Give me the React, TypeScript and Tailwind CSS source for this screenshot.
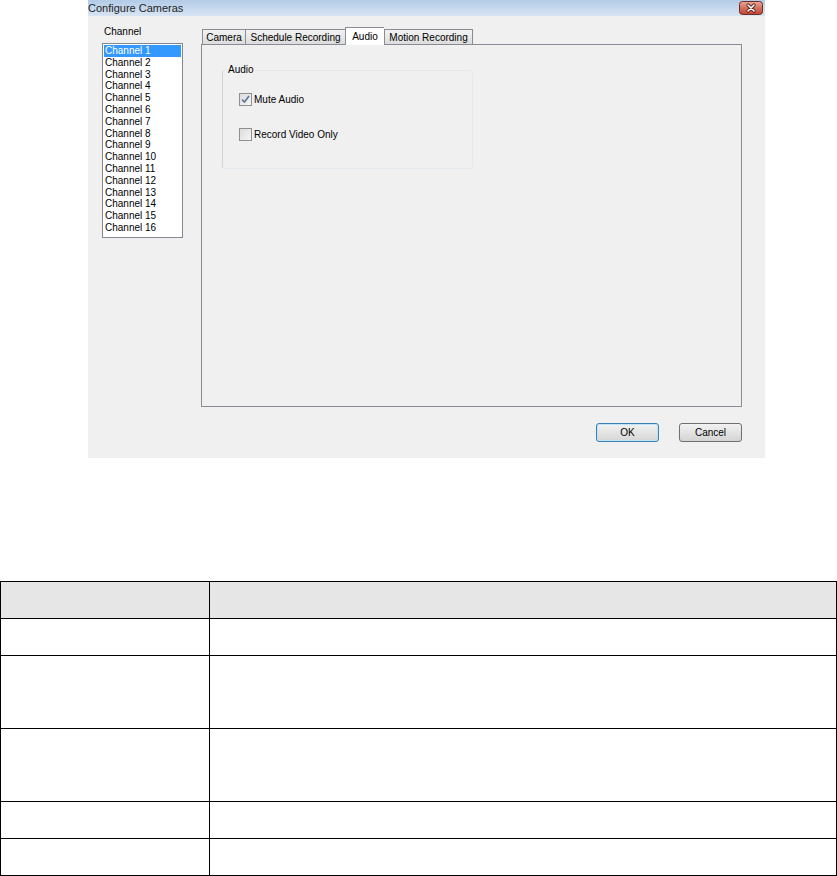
const channels = Array.from({ length: 16 }, (_, i) => `Channel ${i + 1}`);

const tabs = [
  { label: "Camera", width: "w-[43px]" },
  { label: "Schedule Recording", width: "w-[100px]" },
  { label: "Audio", width: "w-[39px]", active: true },
  { label: "Motion Recording", width: "w-[89px]", last: true },
];

const rows = [
  "h-[37px]",
  "h-[37px]",
  "h-[73px]",
  "h-[73px]",
  "h-[37px]",
  "h-[37px]",
];

const CloseButton = () => (
  <svg width="24" height="14" viewBox="0 0 24 14" className="mr-[2px]">
    <defs>
      <linearGradient id="closeBg" x1="0" y1="0" x2="0" y2="1">
        <stop offset="0" stopColor="#e9a99c" />
        <stop offset="0.5" stopColor="#d5705f" />
        <stop offset="1" stopColor="#c0432f" />
      </linearGradient>
    </defs>
    <rect x="0.5" y="0.5" width="23" height="13" rx="3" fill="url(#closeBg)" stroke="#6f2a22" />
    <path d="M9 4 L15 10 M15 4 L9 10" stroke="#5a2018" strokeWidth="3.2" strokeLinecap="round" />
    <path d="M9 4 L15 10 M15 4 L9 10" stroke="#ffffff" strokeWidth="1.6" strokeLinecap="round" />
  </svg>
);

const Checkbox = ({ checked }: { checked?: boolean }) => (
  <span className="w-[13px] h-[13px] border border-[#8f8f8f] bg-gradient-to-br from-[#dcdcdc] to-[#f6f6f6] flex items-center justify-center">
    {checked && (
      <svg width="9" height="9" viewBox="0 0 9 9">
        <path d="M1 4.5 L3.5 7 L8 1" fill="none" stroke="#5f7396" strokeWidth="1.6" />
      </svg>
    )}
  </span>
);

export default function App() {
  return (
    <div className="w-[837px] bg-white font-['Liberation_Sans',Arial,sans-serif] text-[10px] text-black">
      {/* dialog */}
      <div className="ml-[88px] w-[677px] h-[458px] bg-[#f0f0f0] flex flex-col">
        <div className="h-[16px] bg-gradient-to-b from-[#b3cbe7] to-[#d8e5f3] flex items-center justify-between">
          <span className="text-[11px] leading-[14px] text-[#1e1e1e]">Configure Cameras</span>
          <CloseButton />
        </div>

        <div className="flex flex-col pl-[14px] pr-[23px]">
          <div className="flex pt-[10px]">
            <div className="w-[81px] flex flex-col">
              <span className="leading-[12px] pl-[2px]">Channel</span>
              <div className="mt-[5px] h-[195px] border border-[#828790] bg-white p-[1px]">
                {channels.map((ch, i) => (
                  <div
                    key={ch}
                    className={`h-[11.8px] leading-[11.8px] pl-[1px] whitespace-nowrap ${
                      i === 0 ? "bg-[#3399ff] text-white" : ""
                    }`}
                  >
                    {ch}
                  </div>
                ))}
              </div>
            </div>

            <div className="ml-[18px] w-[541px] flex flex-col mt-[1px]">
              <div className="h-[17px] flex items-end pl-[1px]">
                {tabs.map((t) => (
                  <div
                    key={t.label}
                    className={`${t.width} flex items-center justify-center whitespace-nowrap border-l border-t border-[#898c95] ${
                      t.last ? "border-r" : ""
                    } ${
                      t.active
                        ? "h-[18px] -mb-px relative z-10 bg-white"
                        : "h-[15px] bg-gradient-to-b from-[#f3f3f3] to-[#dcdcdc]"
                    }`}
                  >
                    {t.label}
                  </div>
                ))}
              </div>
              <div className="h-[363px] border border-[#898c95] bg-[#f0f0f0] pl-[20px] pt-[19px]">
                <fieldset className="w-[251px] h-[105px] border border-[#e2e8ec] border-l-[#d0d5d9] rounded-[3px] p-0 m-0">
                  <legend className="ml-[4px] px-[1px] leading-[12px]">Audio</legend>
                  <div className="flex flex-col pl-[16px]">
                    <label className="mt-[17px] flex items-center gap-[2px] leading-[13px]">
                      <Checkbox checked />
                      <span>Mute Audio</span>
                    </label>
                    <label className="mt-[22px] flex items-center gap-[2px] leading-[13px]">
                      <Checkbox />
                      <span>Record Video Only</span>
                    </label>
                  </div>
                </fieldset>
              </div>
            </div>
          </div>

          <div className="flex justify-end gap-[20px] mt-[16px]">
            <button className="w-[63px] h-[19px] rounded-[3px] border border-[#3c7fb1] bg-gradient-to-b from-[#f2f2f2] to-[#d6d6d6] shadow-[inset_0_0_0_1px_#bfe3f7] leading-[17px]">
              OK
            </button>
            <button className="w-[63px] h-[19px] rounded-[3px] border border-[#707070] bg-gradient-to-b from-[#f2f2f2] to-[#d4d4d4] leading-[17px]">
              Cancel
            </button>
          </div>
        </div>
      </div>

      {/* table */}
      <div className="mt-[123px] grid grid-cols-[209px_627px] border-l border-t border-black">
        {rows.map((h, r) => (
          <div key={r} className="contents">
            <div className={`${h} border-r border-b border-black ${r === 0 ? "bg-[#e6e6e6]" : ""}`} />
            <div className={`${h} border-r border-b border-black ${r === 0 ? "bg-[#e6e6e6]" : ""}`} />
          </div>
        ))}
      </div>
    </div>
  );
}
